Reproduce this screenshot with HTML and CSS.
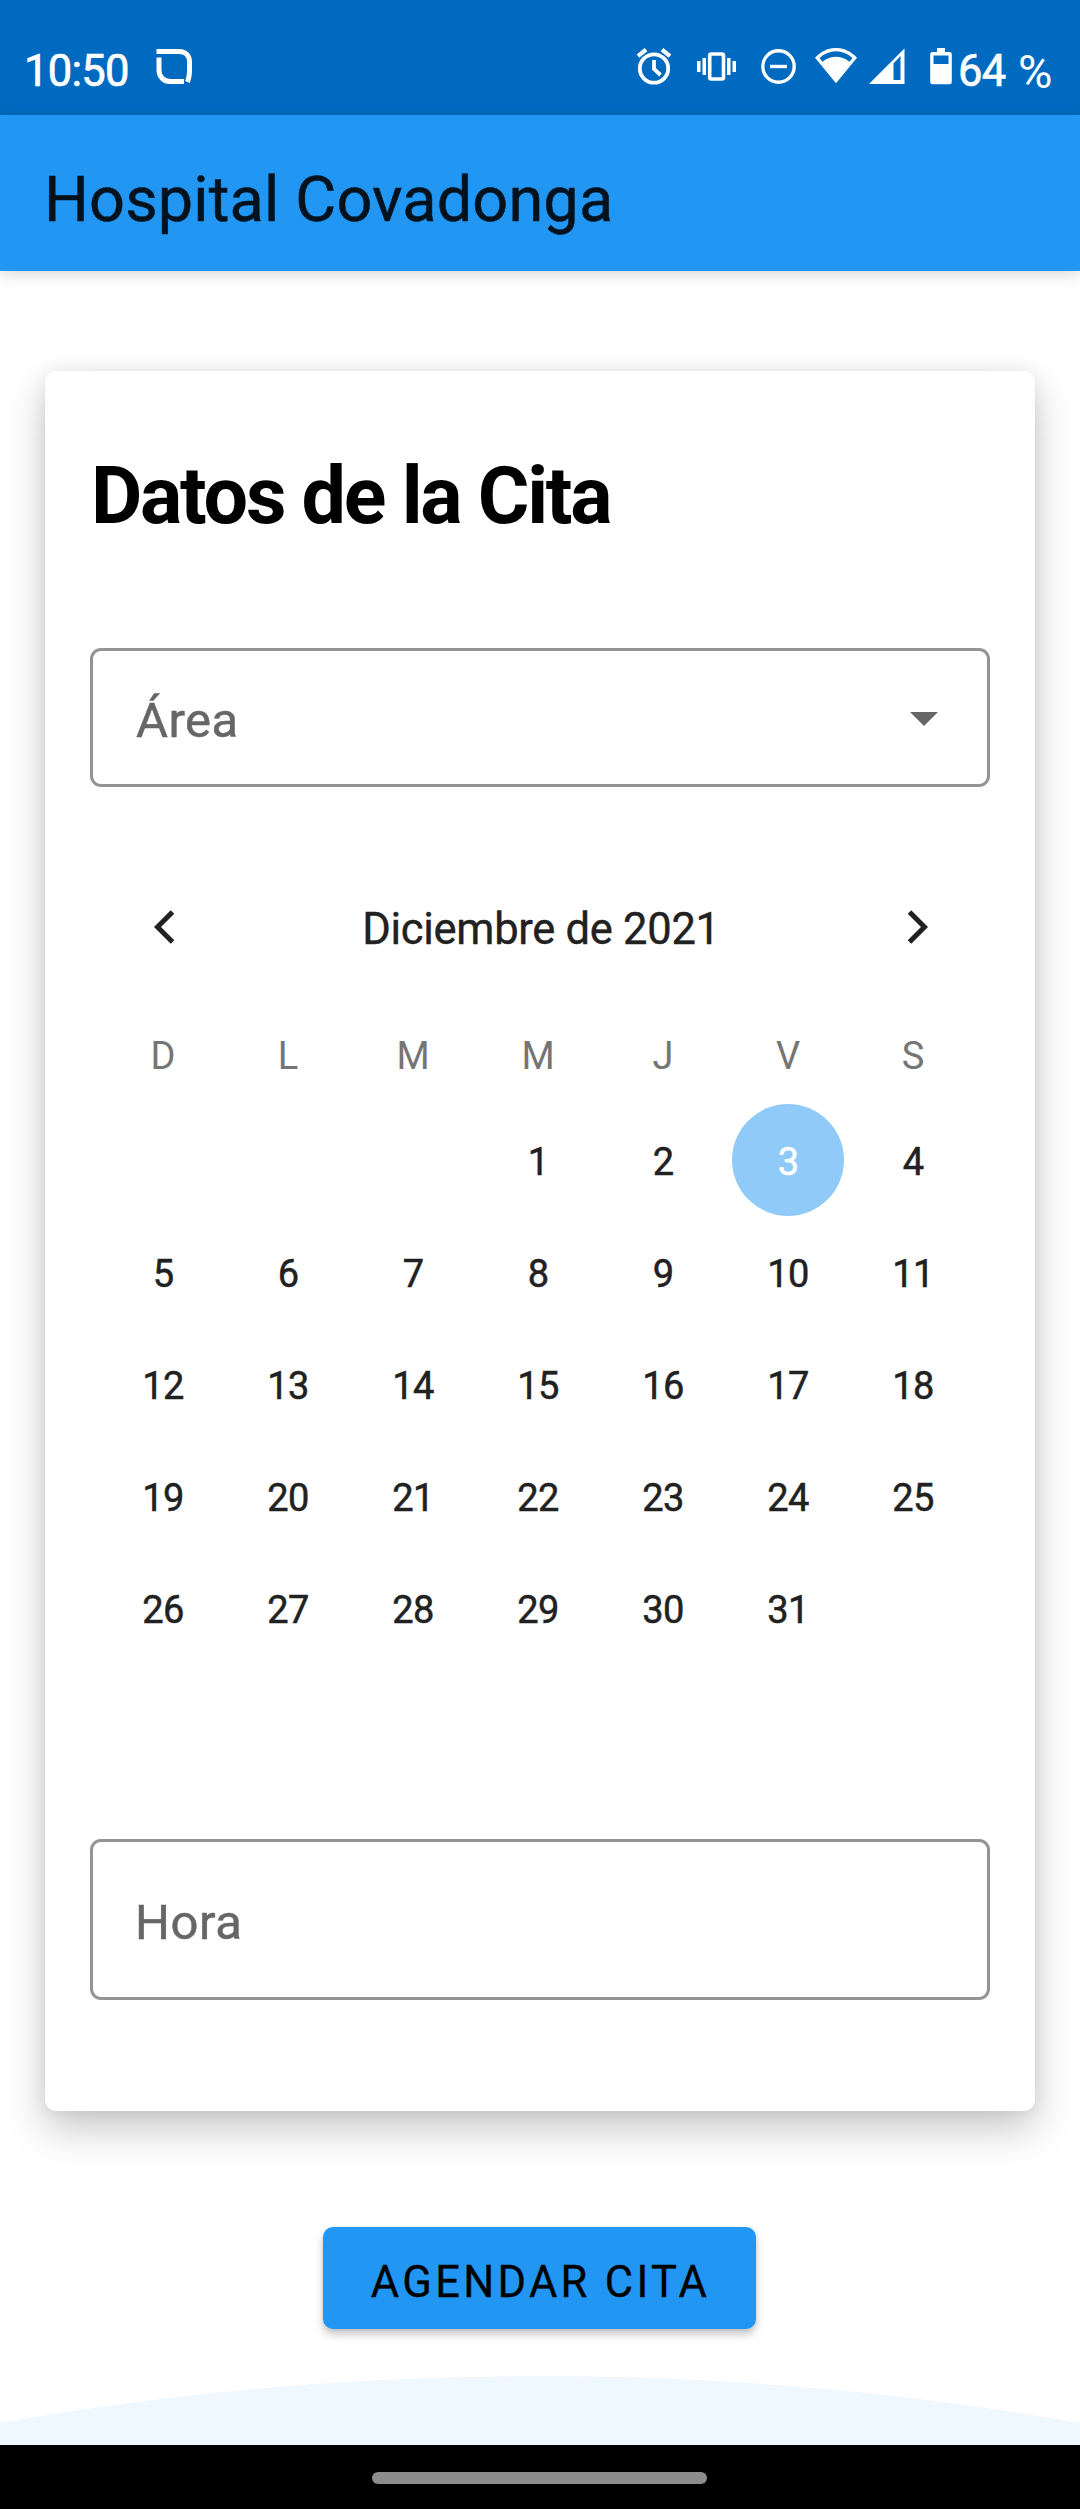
FILE: index.html
```
<!DOCTYPE html>
<html lang="es">
<head>
<meta charset="utf-8">
<meta name="viewport" content="width=device-width">
<title>Hospital Covadonga</title>
<link rel="stylesheet" href="styles.css">
</head>
<body>
<header class="status">
  <span class="clock">10:50</span>
  <svg class="status-app" width="37" height="37" viewBox="0 0 37 37" fill="none" stroke="#fff" stroke-width="5"><path d="M.5 3.500H23C30 3.500 33.500 8 33.500 14V24C33.500 28 33 30 31.500 34"/><path d="M3 9.500V22C3 29 8 33.500 14 33.500H28"/></svg>
  <div class="status-icons">
    <svg class="alarm" width="36" height="37" viewBox="0 0 36 37" fill="none" stroke="#fff" stroke-width="3.800"><circle cx="18" cy="20.500" r="14.200"/><path d="M18 12v9l6.500 6"/><path d="M2 8.200l8-6.500M34 8.200l-8-6.500" stroke-width="4.200"/></svg>
    <svg class="vibrate" width="39" height="37" viewBox="0 0 39 37" fill="#fff"><path d="M0 13h3.500v11H0zM5.500 10H9v17H5.500zM30 10h3.500v17H30zM35.500 13H39v11h-3.500z"/><rect x="12.700" y="6" width="13.800" height="25" rx="1.500" fill="none" stroke="#fff" stroke-width="3.600"/></svg>
    <svg class="dnd" width="35" height="37" viewBox="0 0 35 37" fill="none" stroke="#fff" stroke-width="3.400"><circle cx="17.500" cy="18.500" r="15.700"/><path d="M9 18.500h17"/></svg>
    <svg class="wifi" width="42" height="37" viewBox="0 0 42 37"><path d="M0 9.800C12-3.300 30-3.300 42 9.800L21 35.200Z" fill="#fff"/><path d="M4.500 10C14 1 28 1 37.500 10L34.500 13.700C26 7 16 7 7.500 13.700Z" fill="#006ac0"/></svg>
    <svg class="signal" width="36" height="37" viewBox="0 0 36 37"><path d="M0 36L35.500.5V36Z" fill="#fff"/><path d="M24.500 15.500L31.500 8V32H24.500Z" fill="#006ac0"/></svg>
    <svg class="battery" width="22" height="37" viewBox="0 0 22 37"><path d="M7 0h8v4h4.500a2.300 2.300 0 0 1 2.300 2.300V34a2.300 2.300 0 0 1-2.300 2.300h-17A2.300 2.300 0 0 1 .2 34V6.300A2.300 2.300 0 0 1 2.500 4H7z" fill="#fff"/><path d="M3.500 7.500h15v8.500h-15z" fill="#006ac0"/></svg>
    <span class="level">64</span><span class="percent">%</span>
  </div>
</header>
<div class="appbar">Hospital Covadonga</div>
<main>
  <section class="card">
    <h1>Datos de la Cita</h1>
    <div class="field area"><span>Área</span><svg width="28" height="14" viewBox="0 0 28 14"><path d="M0 0h28L14 14z" fill="#666"/></svg></div>
    <div class="month">
      <svg width="21" height="34" viewBox="0 0 21 34" fill="none" stroke="#212121" stroke-width="5"><path d="M18.500 2L3.500 17L18.500 32"/></svg>
      <span>Diciembre de 2021</span>
      <svg width="21" height="34" viewBox="0 0 21 34" fill="none" stroke="#212121" stroke-width="5"><path d="M2.500 2L17.500 17L2.500 32"/></svg>
    </div>
    <div class="weekdays"><span>D</span><span>L</span><span>M</span><span>M</span><span>J</span><span>V</span><span>S</span></div>
    <div class="days">
      <span></span><span></span><span></span><span>1</span><span>2</span><span class="selected">3</span><span>4</span>
      <span>5</span><span>6</span><span>7</span><span>8</span><span>9</span><span>10</span><span>11</span>
      <span>12</span><span>13</span><span>14</span><span>15</span><span>16</span><span>17</span><span>18</span>
      <span>19</span><span>20</span><span>21</span><span>22</span><span>23</span><span>24</span><span>25</span>
      <span>26</span><span>27</span><span>28</span><span>29</span><span>30</span><span>31</span><span></span>
    </div>
    <div class="field hour"><span>Hora</span></div>
  </section>
  <button class="submit" type="button">AGENDAR CITA</button>
</main>
<svg class="wave" width="1080" height="69" viewBox="0 0 1080 69"><circle cx="540" cy="3126" r="3126" fill="#eff7ff"/></svg>
<footer class="navbar"><div class="pill"></div></footer>
</body>
</html>
```
FILE: styles.css
```
* { box-sizing: border-box; }
body {
  margin: 0;
  width: 1080px;
  height: 2509px;
  display: flex;
  flex-direction: column;
  background: #fff;
  font-family: Roboto, sans-serif;
  overflow: hidden;
}
svg { display: block; flex: none; }

.status {
  height: 115px;
  flex: none;
  display: flex;
  align-items: flex-start;
  padding: 48px 0 0 23px;
  background: #006ac0;
  color: #fff;
  font-size: 43.5px;
  line-height: 47px;
}
.clock { width: 133px; padding-left: 1px; letter-spacing: -.7px; -webkit-text-stroke: .7px; }
.status-icons { display: flex; margin-left: 443px; }
.vibrate { margin-left: 25px; }
.dnd { margin-left: 25px; }
.wifi { margin-left: 19px; }
.signal { margin-left: 12px; }
.battery { margin-left: 25px; }
.level { margin-left: 6px; width: 60px; letter-spacing: -.6px; -webkit-text-stroke: .7px; }
.percent { font-size: 47px; }

.appbar {
  height: 156px;
  flex: none;
  padding: 13px 0 0 44px;
  background: #2196f3;
  color: #04121d;
  font-size: 63px;
  line-height: 143px;
  letter-spacing: .15px;
  -webkit-text-stroke: .5px;
  box-shadow: 0 3px 14px rgba(0, 0, 0, .16);
}

main { flex: none; display: flex; flex-direction: column; align-items: center; }
.card {
  width: 990px;
  height: 1740px;
  margin-top: 100px;
  padding: 77px 45px 0;
  border-radius: 11px;
  background: #fff;
  box-shadow: 0 18px 40px rgba(0, 0, 0, .22), 0 0 16px rgba(0, 0, 0, .07);
}
h1 {
  margin: 0 0 104px;
  padding-left: 1px;
  font-size: 79px;
  line-height: 96px;
  font-weight: 700;
  letter-spacing: -2.25px;
  color: #000;
}
.field {
  display: flex;
  justify-content: space-between;
  border: 3px solid #939393;
  border-radius: 11px;
  color: #666;
  font-size: 49px;
  -webkit-text-stroke: .5px;
}
.area { height: 139px; padding: 7px 49px 0 43px; line-height: 126px; letter-spacing: .5px; }
.area svg { margin-top: 54px; }
.hour { height: 161px; margin-top: 175px; padding: 7px 42px 0; line-height: 147px; letter-spacing: .6px; }

.month {
  display: flex;
  justify-content: space-between;
  align-items: center;
  height: 80px;
  margin-top: 102px;
  padding: 0 62px 0 64px;
  color: #212121;
  font-size: 43.5px;
  letter-spacing: -.3px;
  -webkit-text-stroke: .4px;
}
.month svg { margin-top: -5px; }
.weekdays, .days {
  display: grid;
  grid-template-columns: repeat(7, 125px);
  margin-left: 10.5px;
  text-align: center;
  font-size: 38px;
}
.weekdays { height: 135px; padding-top: 39px; line-height: 96px; color: #757575; }
.days { grid-auto-rows: 112px; justify-items: center; color: #212121; letter-spacing: -.7px; -webkit-text-stroke: .5px; }
.days span { width: 112px; padding-top: 4px; line-height: 108px; }
.days .selected { border-radius: 50%; background: #90caf9; color: #fff; }

.submit {
  width: 433px;
  height: 102px;
  margin: 116px 1px 0 0;
  padding: 10px 0 0 2px;
  border: 0;
  border-radius: 10px;
  background: #2196f3;
  color: #000;
  font: 43.5px/92px Roboto, sans-serif;
  letter-spacing: 3.3px;
  white-space: nowrap;
  -webkit-text-stroke: .3px;
  box-shadow: 0 6px 9px rgba(0, 0, 0, .2), 0 1px 4px rgba(0, 0, 0, .1);
}
.wave { margin-top: 47px; }
.navbar { flex: none; height: 64px; padding-top: 27px; background: #000; }
.pill { width: 335px; height: 12px; margin-left: 372px; border-radius: 6px; background: #8c8c8c; }
```
